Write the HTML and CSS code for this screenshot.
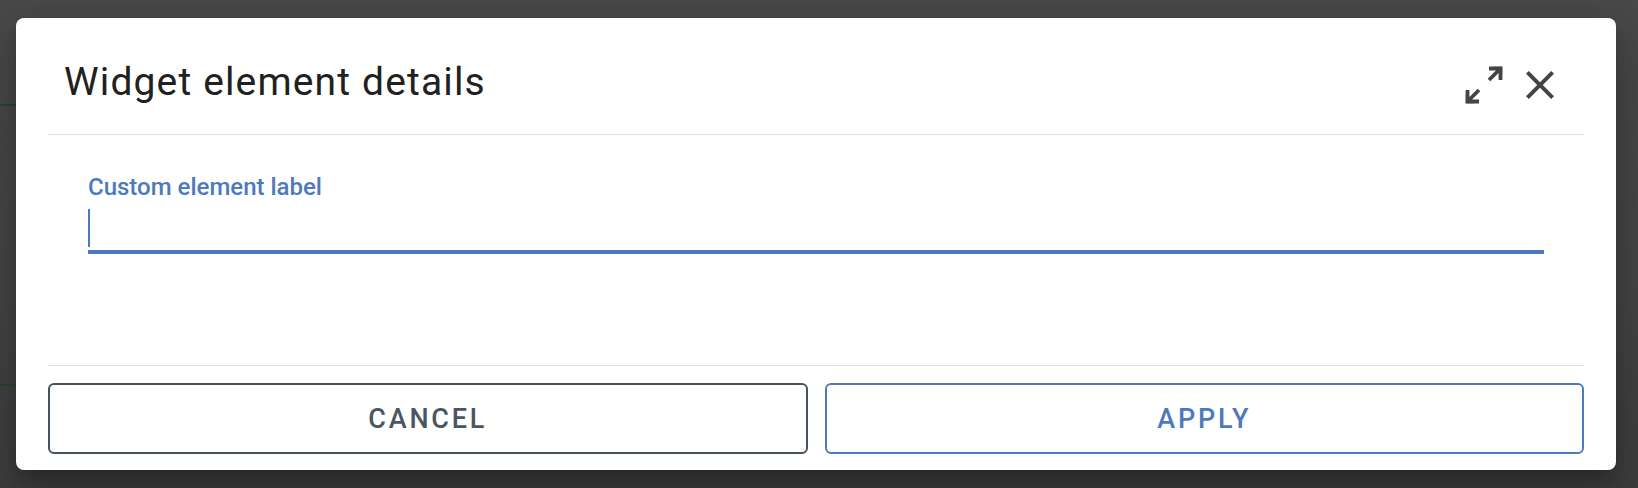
FILE: index.html
```html
<!DOCTYPE html>
<html lang="en">
<head>
<meta charset="utf-8">
<title>Widget element details</title>
<link rel="stylesheet" href="styles.css">
</head>
<body>
<div class="backdrop">
  <span class="page-line line-a"></span>
  <span class="page-line line-b"></span>
</div>
<div class="dialog" role="dialog">
  <header class="dialog-header">
    <h2 class="dialog-title">Widget element details</h2>
    <div class="header-actions">
      <button class="icon-btn" aria-label="Maximize">
        <svg viewBox="0 0 48 48" width="48" height="48" class="stroke-icon"><path d="M30 7.5H41.5V19M41.5 7.5L30 19M8.5 29V40.5H20M8.5 40.5L20 29"/><path class="head" d="M43.2 5.8V14L35 5.8zM6.8 42.2V34L15 42.2z"/></svg>
      </button>
      <button class="icon-btn" aria-label="Close">
        <svg viewBox="0 0 24 24" width="48" height="48" class="fill-icon"><path d="M19 6.41 17.59 5 12 10.59 6.41 5 5 6.41 10.59 12 5 17.59 6.41 19 12 13.41 17.59 19 19 17.59 13.41 12z"/></svg>
      </button>
    </div>
  </header>
  <div class="divider"></div>
  <div class="dialog-content">
    <label class="field">
      <span class="field-label">Custom element label</span>
      <span class="field-input"><span class="caret"></span></span>
    </label>
  </div>
  <div class="divider"></div>
  <footer class="dialog-actions">
    <button class="btn btn-cancel">CANCEL</button>
    <button class="btn btn-apply">APPLY</button>
  </footer>
</div>
</body>
</html>
```
FILE: styles.css
```css
html, body {
  margin: 0;
  padding: 0;
}
body {
  width: 1638px;
  height: 488px;
  overflow: hidden;
  background: #464646;
  font-family: Roboto, "Noto Sans", sans-serif;
  position: relative;
  padding-top: 18px;
  box-sizing: border-box;
}
.backdrop {
  position: absolute;
  inset: 0;
  background: linear-gradient(180deg, #494949 0%, #454545 60%, #3d3d3d 100%);
}
.page-line {
  position: absolute;
  left: 0;
  width: 16px;
  height: 2px;
  background: #2f432e;
}
.line-a { top: 104px; }
.line-b { top: 384px; }

.dialog {
  position: relative;
  margin-left: 16px;
  width: 1600px;
  height: 452px;
  box-sizing: border-box;
  background: #fff;
  border-radius: 8px;
  padding: 0 32px 16px;
  display: flex;
  flex-direction: column;
  box-shadow: 0 11px 15px -7px rgba(0,0,0,.2), 0 24px 38px 3px rgba(0,0,0,.14), 0 9px 46px 8px rgba(0,0,0,.12);
}
.dialog-header {
  height: 116px;
  display: flex;
  align-items: flex-start;
  justify-content: space-between;
}
.dialog-title {
  margin: 41px 0 0 16px;
  font-size: 39px;
  line-height: 46px;
  font-weight: 400;
  color: #212121;
  letter-spacing: 1.15px;
}
.header-actions {
  display: flex;
  gap: 9px;
  margin-right: 20px;
  margin-top: 43px;
}
.icon-btn {
  width: 48px;
  height: 48px;
  padding: 0;
  border: 0;
  background: none;
  display: flex;
}
.fill-icon {
  fill: #444;
}
.stroke-icon {
  fill: none;
  stroke: #444;
  stroke-width: 3.8;
  stroke-linecap: butt;
  stroke-linejoin: miter;
}
.stroke-icon .head {
  fill: #444;
  stroke: none;
}
.divider {
  height: 1px;
  background: #e0e0e0;
  flex: none;
}
.dialog-content {
  flex: 1;
  padding: 38px 40px 0;
}
.field {
  display: flex;
  flex-direction: column;
}
.field-label {
  font-size: 24px;
  font-weight: 500;
  color: #4d7abd;
  line-height: 28px;
}
.field-input {
  margin-top: 8px;
  height: 41px;
  border-bottom: 4px solid #4d7abd;
  display: flex;
}
.caret {
  width: 2px;
  height: 38px;
  background: #4d7abd;
}
.dialog-actions {
  display: flex;
  gap: 17px;
  padding-top: 17px;
}
.btn {
  flex: 1;
  height: 71px;
  box-sizing: border-box;
  border-radius: 6px;
  background: #fff;
  font-family: Roboto, "Noto Sans", sans-serif;
  font-size: 27px;
  font-weight: 500;
  letter-spacing: 2.8px;
}
.btn-cancel {
  border: 2px solid #46525e;
  color: #4b5662;
}
.btn-apply {
  border: 2px solid #4d7abd;
  color: #4d7abd;
}
```
